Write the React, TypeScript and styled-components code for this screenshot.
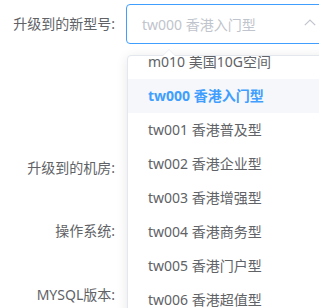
import styled, { createGlobalStyle } from 'styled-components';

const GlobalStyle = createGlobalStyle`
	html, body {
		margin: 0;
		padding: 0;
		background: #ffffff;
		overflow: hidden;
	}
	body {
		font-family: "Noto Sans", "Noto Sans CJK SC", sans-serif;
		font-size: 14px;
		color: #606266;
	}
`;

const options = [
	'm010 美国10G空间',
	'tw000 香港入门型',
	'tw001 香港普及型',
	'tw002 香港企业型',
	'tw003 香港增强型',
	'tw004 香港商务型',
	'tw005 香港门户型',
	'tw006 香港超值型',
	'tw007 香港旗舰型',
];

const selected = 'tw000 香港入门型';

const App = () => {
	return (
		<StyledForm>
			<GlobalStyle />
			<StyledRow $gap={104}>
				<StyledLabel>升级到的新型号:</StyledLabel>
				<StyledSelect>
					<StyledInput $focused>
						<StyledPlaceholder>{selected}</StyledPlaceholder>
						<StyledArrowIcon width="12" height="7" viewBox="0 0 12 7">
							<polyline points="0.8,6.2 6,1 11.2,6.2" fill="none" stroke="#c0c4cc" strokeWidth="1.2" />
						</StyledArrowIcon>
					</StyledInput>
					<StyledDropdown>
						<StyledPopperArrow />
						<StyledList>
							{options.map((opt) => (
								<StyledOption key={opt} $active={opt === selected}>
									{opt}
								</StyledOption>
							))}
						</StyledList>
					</StyledDropdown>
				</StyledSelect>
			</StyledRow>
			<StyledRow $gap={23}>
				<StyledLabel>升级到的机房:</StyledLabel>
			</StyledRow>
			<StyledRow $gap={24}>
				<StyledLabel>操作系统:</StyledLabel>
			</StyledRow>
			<StyledRow $gap={0}>
				<StyledLabel>MYSQL版本:</StyledLabel>
			</StyledRow>
		</StyledForm>
	);
};

export default App;

const StyledForm = styled.form`
	padding-top: 4px;
	width: 319px;
	height: 308px;
	overflow: hidden;
`;

const StyledRow = styled.div<{ $gap: number }>`
	display: flex;
	align-items: center;
	height: 40px;
	margin-bottom: ${(p) => p.$gap}px;
`;

const StyledLabel = styled.label`
	flex: 0 0 126px;
	box-sizing: border-box;
	padding-right: 11px;
	text-align: right;
	line-height: 40px;
	color: #606266;
	font-size: 14px;
	white-space: nowrap;
`;

const StyledSelect = styled.div`
	position: relative;
	flex: 0 0 210px;
	min-width: 210px;
	height: 40px;
`;

const StyledInput = styled.div<{ $focused?: boolean }>`
	box-sizing: border-box;
	display: flex;
	align-items: center;
	width: 100%;
	height: 40px;
	padding: 0 19px 0 15px;
	border: 1px solid ${(p) => (p.$focused ? '#409eff' : '#dcdfe6')};
	border-radius: 4px;
	background: #ffffff;
`;

const StyledPlaceholder = styled.span`
	flex: 1;
	color: #c0c4cc;
	font-size: 14px;
	white-space: nowrap;
`;

const StyledArrowIcon = styled.svg`
	display: block;
	flex: 0 0 12px;
	margin-top: -4px;
`;

const StyledDropdown = styled.div`
	position: absolute;
	top: 51px;
	left: 1px;
	width: 208px;
	height: 270px;
	box-sizing: border-box;
	border: 1px solid #e4e7ed;
	border-radius: 4px;
	background: #ffffff;
	box-shadow: 0 2px 12px 0 rgba(0, 0, 0, 0.1);
	z-index: 10;
`;

const StyledPopperArrow = styled.div`
	position: absolute;
	top: -7px;
	left: 35px;
	width: 0;
	height: 0;
	border-left: 6px solid transparent;
	border-right: 6px solid transparent;
	border-bottom: 6px solid #ebeef5;

	&::after {
		content: '';
		position: absolute;
		top: 1px;
		left: -6px;
		border-left: 6px solid transparent;
		border-right: 6px solid transparent;
		border-bottom: 6px solid #ffffff;
	}
`;

const StyledList = styled.ul`
	list-style: none;
	margin: 0;
	padding: 0;
	height: 100%;
	overflow: hidden;
	border-radius: 4px;

	& > li:first-child {
		margin-top: -11px;
	}
`;

const StyledOption = styled.li<{ $active?: boolean }>`
	height: 34px;
	line-height: 34px;
	padding: 0 20px;
	font-size: 14px;
	white-space: nowrap;
	color: ${(p) => (p.$active ? '#409eff' : '#606266')};
	font-weight: ${(p) => (p.$active ? 700 : 400)};
	background: ${(p) => (p.$active ? '#f5f7fa' : 'transparent')};
`;
